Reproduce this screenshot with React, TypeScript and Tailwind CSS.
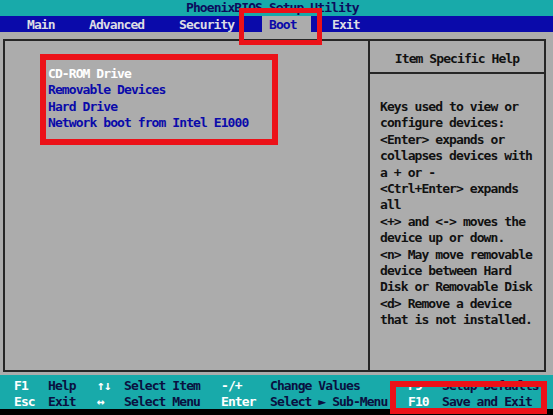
import React from 'react';

// Boot tab of a PhoenixBIOS setup screen, with red annotation boxes on top.

const helpLines = [
  'Keys used to view or',
  'configure devices:',
  '<Enter> expands or',
  'collapses devices with',
  'a + or -',
  '<Ctrl+Enter> expands',
  'all',
  '<+> and <-> moves the',
  'device up or down.',
  '<n> May move removable',
  'device between Hard',
  'Disk or Removable Disk',
  '<d> Remove a device',
  'that is not installed.',
];

const bootItems = ['CD-ROM Drive', 'Removable Devices', 'Hard Drive', 'Network boot from Intel E1000'];

const footer = [
  ['F1', 'Help', '↑↓', 'Select Item', '-/+', 'Change Values', 'F9', 'Setup Defaults'],
  ['Esc', 'Exit', '↔', 'Select Menu', 'Enter', 'Select ► Sub-Menu', 'F10', 'Save and Exit'],
];

export default function App() {
  return (
    <div className="relative w-[553px] h-[415px] overflow-hidden bg-black font-['DejaVu_Sans_Mono',monospace] text-[13px] font-bold tracking-[-0.92px] whitespace-pre">
      {/* Title */}
      <div className="h-[16px] bg-[#18aaaa] pl-[186px] leading-[16px] text-[#0c0c5c]">PhoenixBIOS Setup Utility</div>

      {/* Menu bar */}
      <div className="flex h-[16px] bg-[#0a0aaa] leading-[17px] text-[#dcdce4]">
        <div className="ml-[27px] w-[62px]">Main</div>
        <div className="w-[90px]">Advanced</div>
        <div className="w-[83px]">Security</div>
        <div className="w-[49px] bg-[#acacac] pl-[7px] text-[#0a0aaa]">Boot</div>
        <div className="ml-[21px]">Exit</div>
      </div>

      {/* Body */}
      <div className="h-[343px] bg-[#acacac] pt-[7px] pl-[3px]">
        <div className="flex w-[543px] h-[333px] border-2 border-[#262626]">
          <div className="w-[365px] border-r-2 border-[#262626] pt-[25px] pl-[43px] leading-[16.4px] text-[#0a0aaa]">
            {bootItems.map((item, i) => (
              <div key={item} className={i === 0 ? 'text-white' : ''}>{item}</div>
            ))}
          </div>
          <div className="flex-1 flex flex-col text-[#111111]">
            <div className="h-[33px] border-b-2 border-[#262626] pt-[10px] text-center leading-[16px]">Item Specific Help</div>
            <div className="pt-[25px] pl-[10px] leading-[16.4px]">
              {helpLines.map((line) => (
                <div key={line}>{line}</div>
              ))}
            </div>
          </div>
        </div>
      </div>

      {/* Key legend */}
      <div className="h-[34px] bg-[#18aaaa] pt-[3px] pl-[14px]">
        {footer.map((row, r) => (
          <div key={r} className="grid h-[16px] grid-cols-[34px_49px_27px_97px_49px_138px_34px_1fr] leading-[16px]">
            {row.map((cell, i) => (
              <div key={i} className={i % 2 === 0 ? 'text-white' : 'text-[#0a1040]'}>{cell}</div>
            ))}
          </div>
        ))}
      </div>

      {/* Red annotation boxes */}
      <div className="absolute left-[239px] top-[8px] w-[83px] h-[37px] border-[5px] border-[#ec1118]" />
      <div className="absolute left-[40px] top-[54px] w-[238px] h-[91px] border-[6px] border-[#ec1118]" />
      <div className="absolute left-[390px] top-[381px] w-[157px] h-[33px] border-[6px] border-[#ec1118]" />
    </div>
  );
}
